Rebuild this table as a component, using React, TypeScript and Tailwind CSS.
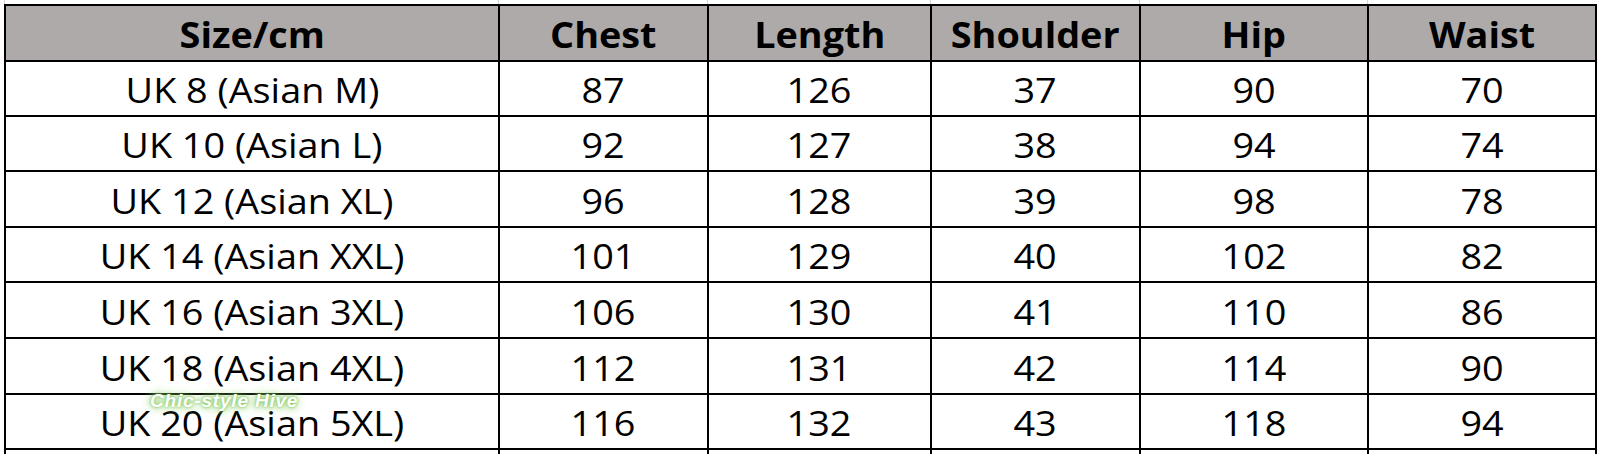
import React from "react";

const headers = ["Size/cm", "Chest", "Length", "Shoulder", "Hip", "Waist"];

const rows: (string | number)[][] = [
  ["UK 8 (Asian M)", 87, 126, 37, 90, 70],
  ["UK 10 (Asian L)", 92, 127, 38, 94, 74],
  ["UK 12 (Asian XL)", 96, 128, 39, 98, 78],
  ["UK 14 (Asian XXL)", 101, 129, 40, 102, 82],
  ["UK 16 (Asian 3XL)", 106, 130, 41, 110, 86],
  ["UK 18 (Asian 4XL)", 112, 131, 42, 114, 90],
  ["UK 20 (Asian 5XL)", 116, 132, 43, 118, 94],
];

const rowHeights = ["h-[53px]", "h-[53px]", "h-[54px]", "h-[53px]", "h-[54px]", "h-[54px]", "h-[53px]"];

export default function App() {
  return (
    <div className="relative h-[454px] w-[1600px] overflow-hidden bg-white font-['Open_Sans','Lato',sans-serif] text-black">
      {/* faint sheet gridlines above the table */}
      <div className="ml-[4px] grid h-[4px] grid-cols-[494px_209px_223px_209px_228px_230px]">
        {headers.map((h) => (
          <div key={h} className="border-l border-[#d4d4d4]" />
        ))}
      </div>

      <div className="ml-[4px] grid w-[1593px] grid-cols-[492px_207px_221px_207px_226px_226px] gap-[2px] bg-black p-[2px]">
        {headers.map((h) => (
          <div
            key={h}
            className="flex h-[54px] items-center justify-center bg-[#aeaaaa] pt-[2px] text-[35px] leading-none font-bold"
          >
            <span className="scale-x-[1.08]">{h}</span>
          </div>
        ))}
        {rows.map((r, i) =>
          r.map((c, j) => (
            <div
              key={`${i}-${j}`}
              className={`flex ${rowHeights[i]} items-center justify-center bg-white pt-[2px] text-[35px] leading-none`}
            >
              <span className="scale-x-[1.08]">{c}</span>
            </div>
          ))
        )}
        {headers.map((h) => (
          <div key={`x-${h}`} className="h-[30px] bg-white" />
        ))}
      </div>

      {/* watermark */}
      <div className="absolute left-[150px] top-[387px] font-['Liberation_Sans',Arial,sans-serif] text-[19px] font-bold italic tracking-[0.8px] text-white [text-shadow:0_0_3px_#6fbf4a,0_0_7px_#8fd16a,0_0_12px_#a8d890]">
        Chic-style Hive
      </div>
    </div>
  );
}
